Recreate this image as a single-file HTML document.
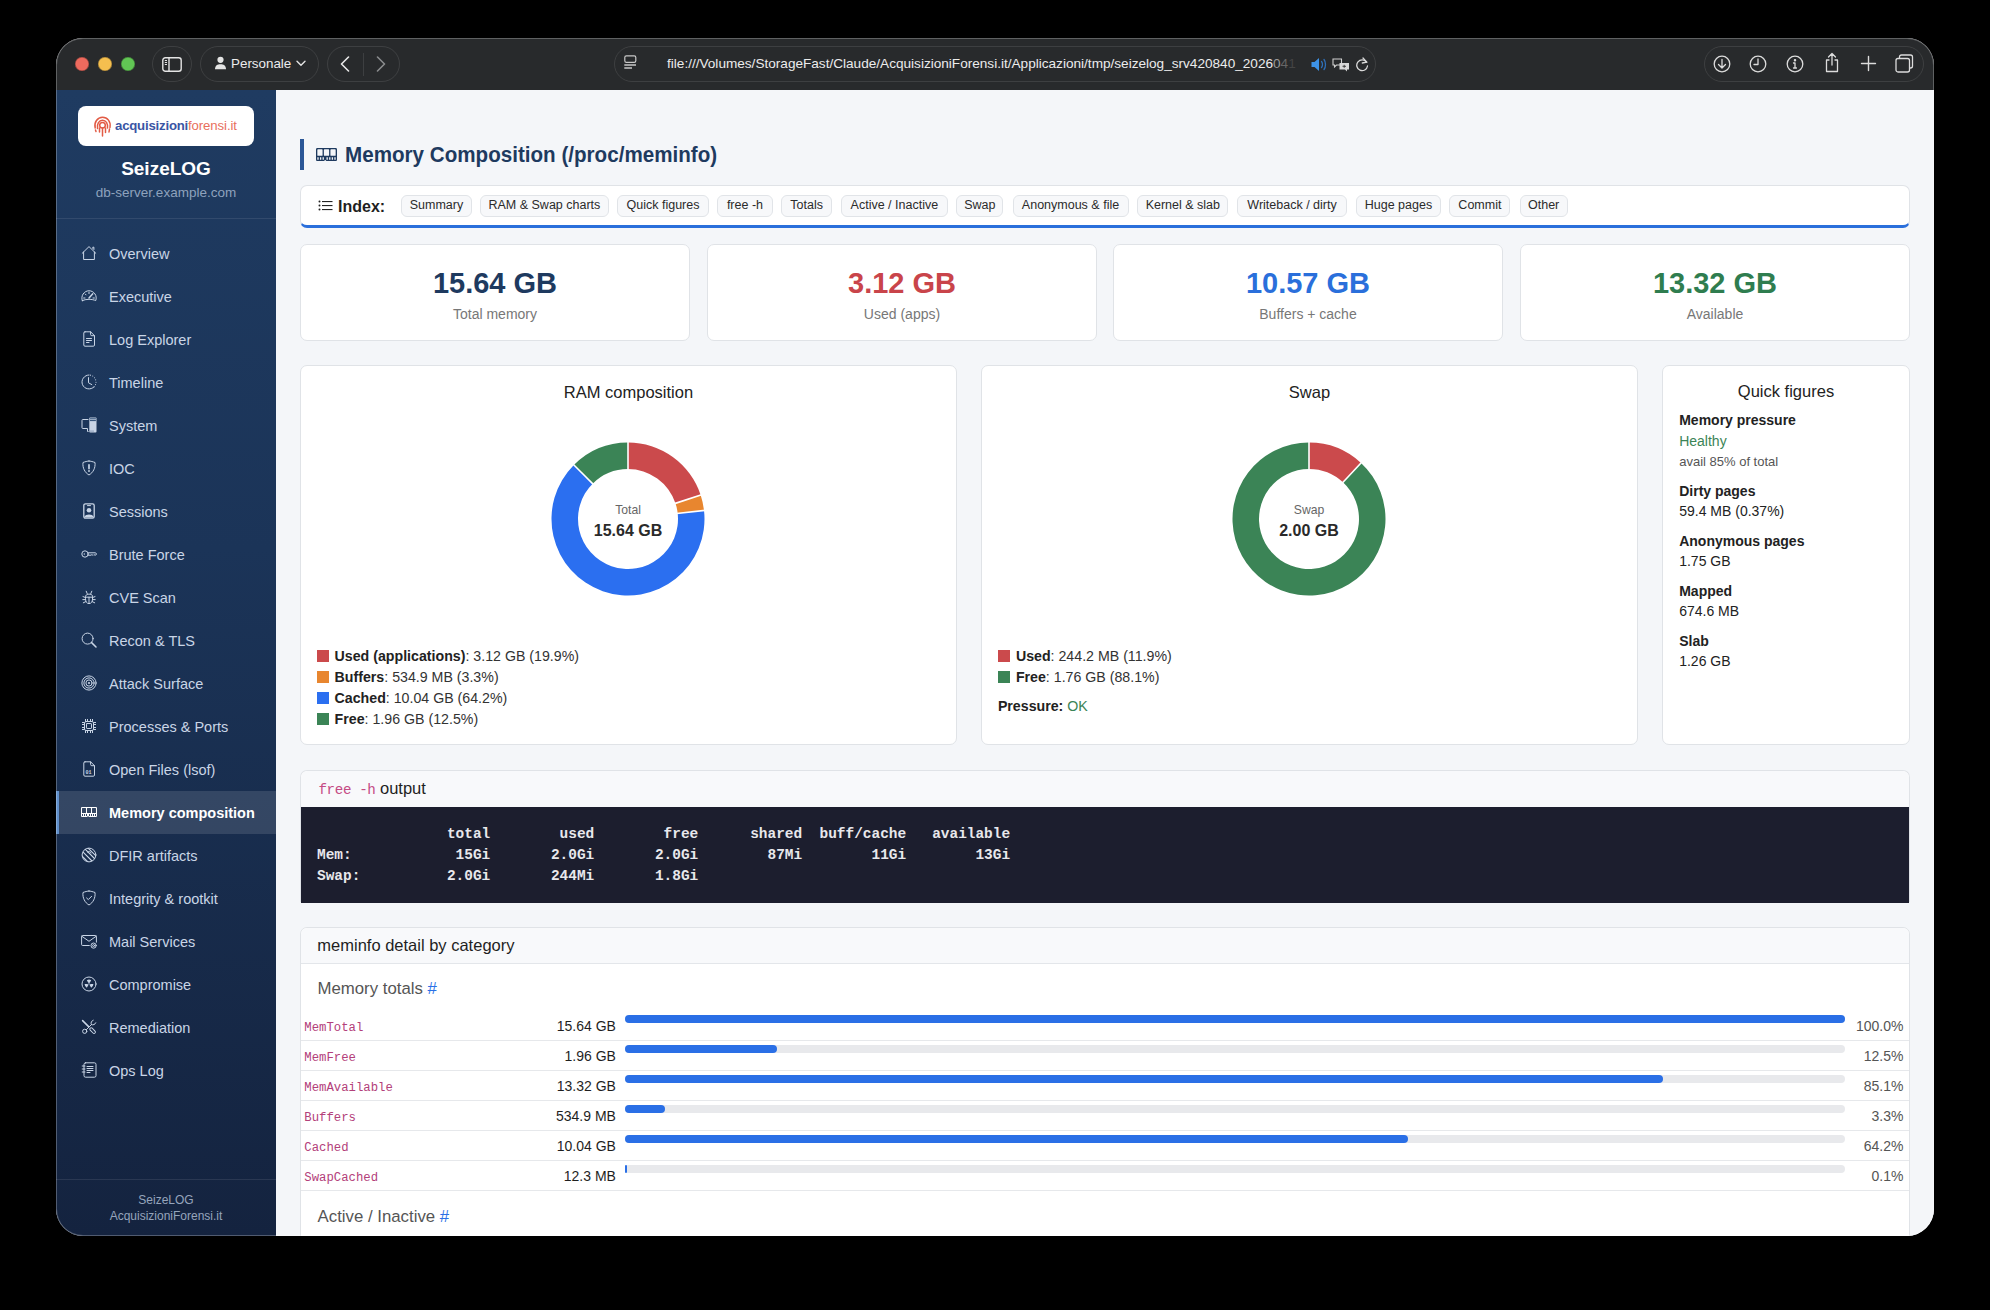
<!DOCTYPE html>
<html><head><meta charset="utf-8"><title>SeizeLOG - Memory composition</title>
<style>
*{box-sizing:border-box;margin:0;padding:0}
html,body{width:1990px;height:1310px;overflow:hidden;background:#000;font-family:"Liberation Sans",sans-serif}
.win{position:absolute;left:56px;top:38px;width:1878px;height:1198px;border-radius:27px;overflow:hidden;background:#f4f6f9}
.winborder{position:absolute;left:56px;top:38px;width:1878px;height:1198px;border-radius:27px;border:1px solid rgba(255,255,255,0.26);pointer-events:none}
.tb{position:absolute;left:0;top:0;width:1878px;height:52px;background:#282a2c}
.tl{position:absolute;top:19px;width:14px;height:14px;border-radius:50%;box-shadow:inset 0 0 0 0.7px rgba(0,0,0,0.28)}
.pill{position:absolute;top:8px;height:36px;border:1px solid rgba(255,255,255,0.10);border-radius:18px}
.tbt{position:absolute;color:#ececec;font-size:13.4px;line-height:18px}
.url{position:absolute;color:#ececec;font-size:13.6px;line-height:18px;white-space:nowrap;letter-spacing:0px}
.sb{position:absolute;left:0;top:52px;width:220px;height:1146px;background:linear-gradient(180deg,#1f3b61 0%,#1b3458 40%,#14233f 100%)}
.logo{position:absolute;left:22px;top:16px;width:176px;height:40px;background:#fff;border-radius:8px}
.lg1{position:absolute;left:37px;top:12px;font-size:13.2px;font-weight:bold;color:#3a55a4;letter-spacing:-0.2px;line-height:16px}
.lg2{position:absolute;left:110px;top:12px;font-size:13.2px;color:#e86f5c;letter-spacing:-0.1px;line-height:16px}
.brand{position:absolute;left:0;width:220px;top:68px;text-align:center;color:#fff;font-weight:bold;font-size:19px;line-height:22px}
.host{position:absolute;left:0;width:220px;top:95px;text-align:center;color:#8ea2bd;font-size:13.5px;line-height:16px}
.sep{position:absolute;left:0;width:220px;height:1px;background:rgba(255,255,255,0.09)}
.nav{position:absolute;left:0;width:220px;height:43px}
.nav.act{background:rgba(255,255,255,0.12)}
.nav.act:before{content:"";position:absolute;left:0;top:0;width:3px;height:43px;background:#5f8fcb}
.ni{position:absolute;left:25px;top:13px;width:17px;height:16px}
.ni svg{display:block}
.nt{position:absolute;left:53px;top:14px;font-size:14.5px;line-height:17px;color:#c9d5e6;white-space:nowrap}
.nav.act .nt{color:#fff;font-weight:bold}
.foot{position:absolute;left:0;width:220px;top:1102px;text-align:center;color:#96a5bc;font-size:12px;line-height:16px}
.main{position:absolute;left:220px;top:52px;width:1658px;height:1146px;background:#f4f6f9;overflow:hidden}
.card{position:absolute;background:#fff;border:1px solid #e0e3e7;border-radius:7px}
.ab{position:absolute}
.chip{position:absolute;top:9px;height:21.5px;border:1px solid #e1e4e8;background:#f7f8fa;border-radius:6px;font-size:12.5px;line-height:18px;color:#2b2b2b;text-align:center;white-space:nowrap}
.sv{position:absolute;left:0;right:0;top:21px;text-align:center;font-size:29px;font-weight:bold;line-height:34px}
.sl{position:absolute;left:0;right:0;top:61px;text-align:center;font-size:14px;color:#777;line-height:17px}
.ct{position:absolute;left:0;right:0;top:17px;text-align:center;font-size:16.5px;color:#222;line-height:19px}
.lg{position:absolute;font-size:14.2px;color:#333;line-height:21px;white-space:nowrap}
.lg b{color:#222}
.sq{display:inline-block;width:12px;height:12px;vertical-align:-1px;margin-right:6px}
.qf{position:absolute;left:16px;font-size:14px;line-height:21px;color:#222;white-space:nowrap}
.mono{font-family:"Liberation Mono",monospace}
pre.fh{position:absolute;left:16px;top:15px;font-family:"Liberation Mono",monospace;font-size:14.45px;line-height:21px;color:#e8e8ec;font-weight:bold}
.row{position:absolute;left:0;width:1608px;height:30px;border-bottom:1px solid #e6e8eb}
.rn{position:absolute;left:4px;top:9px;font-family:"Liberation Mono",monospace;font-size:13px;line-height:16px;color:#b3407a}
.rv{position:absolute;left:150px;width:165px;top:8px;text-align:right;font-size:14px;line-height:17px;color:#1f1f1f}
.bar{position:absolute;left:324px;top:5px;width:1220px;height:8px;border-radius:4px;background:#e8e9ec}
.bar i{position:absolute;left:0;top:0;height:8px;border-radius:4px;background:#2a6fe6}
.rp{position:absolute;left:1500px;width:103px;top:8px;text-align:right;font-size:14px;line-height:17px;color:#555}
.sh{position:absolute;left:16px;font-size:16.5px;line-height:20px;color:#555}
.sh span{color:#2a6fe6}
</style></head>
<body>
<div class="win">
<div class="tb">
  <div class="tl" style="left:19px;background:#ed6a5e"></div>
  <div class="tl" style="left:42px;background:#f5bf4f"></div>
  <div class="tl" style="left:65px;background:#61c554"></div>
  <div class="pill" style="left:96px;width:40px"></div>
  <svg style="position:absolute;left:106px;top:19px" width="20" height="15" viewBox="0 0 20 15" fill="none" stroke="#e4e4e4" stroke-width="1.4"><rect x="0.8" y="0.8" width="18.4" height="13.4" rx="2.5"/><path d="M7 0.8 V14.2"/><path d="M2.8 3.5 H5 M2.8 5.5 H5 M2.8 7.5 H5" stroke-width="1.1"/></svg>
  <div class="pill" style="left:144px;width:119px"></div>
  <svg style="position:absolute;left:159px;top:18px" width="11" height="14" viewBox="0 0 11 14" fill="#e4e4e4"><circle cx="5.5" cy="3.8" r="3.1"/><path d="M0 13.2 C0 9.5 2.5 8.2 5.5 8.2 C8.5 8.2 11 9.5 11 13.2 Z"/></svg>
  <div class="tbt" style="left:175px;top:17px">Personale</div>
  <svg style="position:absolute;left:240px;top:22px" width="10" height="7" viewBox="0 0 10 7" fill="none" stroke="#e4e4e4" stroke-width="1.4" stroke-linecap="round"><path d="M1 1.2 L5 5.2 L9 1.2"/></svg>
  <div class="pill" style="left:271px;width:73px"></div>
  <div style="position:absolute;left:307px;top:15px;width:1px;height:23px;background:rgba(255,255,255,0.1)"></div>
  <svg style="position:absolute;left:284px;top:18px" width="10" height="16" viewBox="0 0 10 16" fill="none" stroke="#e8e8e8" stroke-width="1.6" stroke-linecap="round" stroke-linejoin="round"><path d="M8.5 1 L1.5 8 L8.5 15"/></svg>
  <svg style="position:absolute;left:320px;top:18px" width="10" height="16" viewBox="0 0 10 16" fill="none" stroke="#8a8c8e" stroke-width="1.6" stroke-linecap="round" stroke-linejoin="round"><path d="M1.5 1 L8.5 8 L1.5 15"/></svg>
  <div class="pill" style="left:558px;width:762px"></div>
  <svg style="position:absolute;left:568px;top:17px" width="13" height="15" viewBox="0 0 13 15" fill="none" stroke="#c8c8c8" stroke-width="1.2"><rect x="0.8" y="0.8" width="11" height="6.5" rx="1.6"/><path d="M0.3 10 H12 M0.3 13 H8" stroke-width="1.3"/></svg>
  <div class="url" style="left:611px;top:17px">file:///Volumes/StorageFast/Claude/AcquisizioniForensi.it/Applicazioni/tmp/seizelog_srv420840_2026<span style="color:#9a9a9a">0</span><span style="color:#666">4</span><span style="color:#444">1</span></div>
  <svg style="position:absolute;left:1255px;top:19px" width="16" height="15" viewBox="0 0 16 15"><path d="M0.5 5 H3.5 L8 1 V14 L3.5 10 H0.5 Z" fill="#3d93e8"/><path d="M10.5 4.5 C11.8 6 11.8 9 10.5 10.5 M13 2.5 C15 5 15 10 13 12.5" fill="none" stroke="#2e6fb8" stroke-width="1.3" stroke-linecap="round"/></svg>
  <svg style="position:absolute;left:1276px;top:19.5px" width="18" height="15" viewBox="0 0 18 15"><path d="M1 1 H9.5 V7 H4.5 L2.5 9 V7 H1 Z" fill="none" stroke="#d0d0d0" stroke-width="1.1"/><path d="M7.5 5 H17 V11.5 H15 V13.5 L13 11.5 H7.5 Z" fill="#d8d8d8"/><path d="M10.5 8.3 H14 M12.2 6.8 V9.8" stroke="#333" stroke-width="0.9"/></svg>
  <svg style="position:absolute;left:1299px;top:18.5px" width="14" height="15" viewBox="0 0 14 15" fill="none" stroke="#d8d8d8" stroke-width="1.3" stroke-linecap="round" stroke-linejoin="round"><path d="M11.6 5.2 A5.4 5.4 0 1 0 12.5 9"/><path d="M8 1 L11.8 5.2 L7.3 6"/></svg>
  <div class="pill" style="left:1648px;width:220px"></div>
  <svg style="position:absolute;left:1657px;top:17px" width="18" height="18" viewBox="0 0 18 18" fill="none" stroke="#dcdcdc" stroke-width="1.3" stroke-linecap="round" stroke-linejoin="round"><circle cx="9" cy="9" r="7.8"/><path d="M9 4.5 V13 M5.5 9.5 L9 13 L12.5 9.5"/></svg>
  <svg style="position:absolute;left:1693px;top:17px" width="18" height="18" viewBox="0 0 18 18" fill="none" stroke="#dcdcdc" stroke-width="1.3" stroke-linecap="round" stroke-linejoin="round"><circle cx="9" cy="9" r="7.8"/><path d="M9 4 V9.5 H5"/></svg>
  <svg style="position:absolute;left:1730px;top:17px" width="18" height="18" viewBox="0 0 18 18" fill="none" stroke="#dcdcdc" stroke-width="1.3" stroke-linecap="round" stroke-linejoin="round"><circle cx="9" cy="9" r="7.8"/><path d="M9 8 V13 M7.5 13 H10.5 M7.5 8 H9"/><circle cx="9" cy="5.2" r="0.6" fill="#dcdcdc"/></svg>
  <svg style="position:absolute;left:1767px;top:14px" width="18" height="21" viewBox="0 0 18 21" fill="none" stroke="#dcdcdc" stroke-width="1.3" stroke-linecap="round" stroke-linejoin="round"><path d="M6 8 H3.5 V19.5 H14.5 V8 H12 M9 1.5 V13 M5.5 5 L9 1.5 L12.5 5"/></svg>
  <svg style="position:absolute;left:1804px;top:17px" width="17" height="17" viewBox="0 0 17 17" fill="none" stroke="#dcdcdc" stroke-width="1.4" stroke-linecap="round"><path d="M8.5 1.5 V15.5 M1.5 8.5 H15.5"/></svg>
  <svg style="position:absolute;left:1839px;top:16px" width="19" height="19" viewBox="0 0 19 19" fill="none" stroke="#dcdcdc" stroke-width="1.3" stroke-linejoin="round"><path d="M4.5 4.5 V3 C4.5 1.8 5.3 1 6.5 1 H15.5 C16.7 1 17.5 1.8 17.5 3 V12 C17.5 13.2 16.7 14 15.5 14 H14.5"/><rect x="1" y="4.5" width="13.5" height="13.5" rx="2"/></svg>
</div>

<div class="sb">
  <div class="logo">
    <svg style="position:absolute;left:15px;top:10px" width="19" height="21" viewBox="0 0 19 21" fill="none" stroke="#e25b45" stroke-width="1.5" stroke-linecap="round"><path d="M2.2 12 C0.8 6.5 4.5 1.2 9.5 1.2 C14.5 1.2 18 5.5 17 11.5"/><path d="M4.5 12.5 C3.8 8 6 4.2 9.5 4.2 C13 4.2 15 7.5 14.5 12"/><circle cx="9.5" cy="9.2" r="2.8"/><path d="M6.5 12 V16 M9.5 12 V20 M12.5 12 V16.5 M2.5 14 L3 15.5 M16.5 13 L16 16"/></svg>
    <span class="lg1">acquisizioni</span><span class="lg2">forensi.it</span>
  </div>
  <div class="brand">SeizeLOG</div>
  <div class="host">db-server.example.com</div>
  <div class="sep" style="top:128px"></div>
  <div class="nav" style="top:142px"><span class="ni"><svg width="16" height="16" viewBox="0 0 16 16" fill="none" stroke="#c9d5e6" stroke-width="1" stroke-linecap="round" stroke-linejoin="round" ><path d="M1.2 8.3 L8 1.6 L14.8 8.3 M2.6 7 V14.5 H13.4 V7 M11.8 3.4 V2.2 H12.9 V4.5"/></svg></span><span class="nt">Overview</span></div>
<div class="nav" style="top:185px"><span class="ni"><svg width="16" height="16" viewBox="0 0 16 16" fill="none" stroke="#c9d5e6" stroke-width="1" stroke-linecap="round" stroke-linejoin="round" ><path d="M1.3 12.6 A7.2 7.2 0 1 1 14.7 12.6 C13.2 11.9 10.7 11.3 8 11.3 C5.3 11.3 2.8 11.9 1.3 12.6 Z"/><path d="M8 4.2 V5.6 M4.2 6 L5.1 6.9 M2.6 10 H4 M12 10 H13.4"/><path d="M8 10 L11.8 5.8" stroke-width="1.5"/></svg></span><span class="nt">Executive</span></div>
<div class="nav" style="top:228px"><span class="ni"><svg width="16" height="16" viewBox="0 0 16 16" fill="none" stroke="#c9d5e6" stroke-width="1" stroke-linecap="round" stroke-linejoin="round" ><path d="M4 0.8 H9.6 L13.5 4.7 V14 A1.2 1.2 0 0 1 12.3 15.2 H4 A1.2 1.2 0 0 1 2.8 14 V2 A1.2 1.2 0 0 1 4 0.8 Z"/><path d="M9.6 0.8 V3.5 A1.2 1.2 0 0 0 10.8 4.7 H13.5" /><path d="M5.5 7.5 H10.5 M5.5 9.5 H10.5 M5.5 11.5 H8"/></svg></span><span class="nt">Log Explorer</span></div>
<div class="nav" style="top:271px"><span class="ni"><svg width="16" height="16" viewBox="0 0 16 16" fill="none" stroke="#c9d5e6" stroke-width="1" stroke-linecap="round" stroke-linejoin="round" ><path d="M8 1 A7 7 0 1 0 12.95 12.95"/><circle cx="9.46" cy="1.15" r="0.55" fill="#c9d5e6" stroke="none"/><circle cx="11.71" cy="2.06" r="0.55" fill="#c9d5e6" stroke="none"/><circle cx="13.52" cy="3.69" r="0.55" fill="#c9d5e6" stroke="none"/><circle cx="14.66" cy="5.84" r="0.55" fill="#c9d5e6" stroke="none"/><circle cx="15.00" cy="8.24" r="0.55" fill="#c9d5e6" stroke="none"/><circle cx="14.49" cy="10.62" r="0.55" fill="#c9d5e6" stroke="none"/><circle cx="13.20" cy="12.68" r="0.55" fill="#c9d5e6" stroke="none"/><path d="M7.5 3.6 V8.8 L10.8 10.6"/></svg></span><span class="nt">Timeline</span></div>
<div class="nav" style="top:314px"><span class="ni"><svg width="16" height="16" viewBox="0 0 16 16" fill="none" stroke="#c9d5e6" stroke-width="1" stroke-linecap="round" stroke-linejoin="round" ><path d="M7 2.5 H1.8 A0.8 0.8 0 0 0 1 3.3 V10.7 A0.8 0.8 0 0 0 1.8 11.5 H6.5 V14.5 H7.2"/><rect x="8.3" y="0.5" width="7.2" height="15" rx="0.9" fill="#c9d5e6" stroke="none"/><path d="M9.3 1.8 H14.5 M9.3 3.6 H14.5" stroke="#2b4a72"/><circle cx="10" cy="14" r="0.5" fill="#2b4a72" stroke="none"/><circle cx="12" cy="14" r="0.5" fill="#2b4a72" stroke="none"/></svg></span><span class="nt">System</span></div>
<div class="nav" style="top:357px"><span class="ni"><svg width="16" height="16" viewBox="0 0 16 16" fill="none" stroke="#c9d5e6" stroke-width="1" stroke-linecap="round" stroke-linejoin="round" ><path d="M8 1 C6.6 1 3.6 1.9 2 2.5 C1.4 8 3.9 12.6 8 15 C12.1 12.6 14.6 8 14 2.5 C12.4 1.9 9.4 1 8 1 Z"/><path d="M8 4.8 V8.6" stroke-width="1.7"/><circle cx="8" cy="11" r="0.95" fill="#c9d5e6" stroke="none"/></svg></span><span class="nt">IOC</span></div>
<div class="nav" style="top:400px"><span class="ni"><svg width="16" height="16" viewBox="0 0 16 16" fill="none" stroke="#c9d5e6" stroke-width="1" stroke-linecap="round" stroke-linejoin="round" ><rect x="2.8" y="0.8" width="10.4" height="14.4" rx="1.6" stroke-width="1.3"/><path d="M6.5 2.6 H9.5"/><circle cx="8" cy="7.3" r="2.3" fill="#c9d5e6" stroke="none"/><path d="M3.6 13.6 C4.4 10.9 11.6 10.9 12.4 13.6 V14.4 H3.6 Z" fill="#c9d5e6" stroke="none"/></svg></span><span class="nt">Sessions</span></div>
<div class="nav" style="top:443px"><span class="ni"><svg width="16" height="16" viewBox="0 0 16 16" fill="none" stroke="#c9d5e6" stroke-width="1" stroke-linecap="round" stroke-linejoin="round" ><circle cx="4" cy="8" r="3.2"/><circle cx="3.3" cy="8" r="0.7" fill="#c9d5e6" stroke="none"/><path d="M7.2 6.8 H14.6 L15.5 8 L14.6 9.2 H13.8 L13.2 8.6 L12.6 9.2 L12 8.6 L11.4 9.2 L10.8 8.6 L10.2 9.2 H7.2"/></svg></span><span class="nt">Brute Force</span></div>
<div class="nav" style="top:486px"><span class="ni"><svg width="16" height="16" viewBox="0 0 16 16" fill="none" stroke="#c9d5e6" stroke-width="1" stroke-linecap="round" stroke-linejoin="round" ><path d="M4.5 7.2 C4.5 4.4 11.5 4.4 11.5 7.2 V10.2 C11.5 13 10 14.6 8 14.6 C6 14.6 4.5 13 4.5 10.2 Z M4.5 8.2 H11.5 M8 8.2 V14.5 M6.2 4.6 L5.2 2.2 M9.8 4.6 L10.8 2.2 M4.5 8.6 L2 7.6 M11.5 8.6 L14 7.6 M4.5 10.6 H1.8 M11.5 10.6 H14.2 M4.8 12.6 L2.3 13.8 M11.2 12.6 L13.7 13.8"/></svg></span><span class="nt">CVE Scan</span></div>
<div class="nav" style="top:529px"><span class="ni"><svg width="16" height="16" viewBox="0 0 16 16" fill="none" stroke="#c9d5e6" stroke-width="1" stroke-linecap="round" stroke-linejoin="round" ><circle cx="6.6" cy="6.6" r="5.5"/><path d="M10.6 10.6 L15 15" stroke-width="1.5"/></svg></span><span class="nt">Recon &amp; TLS</span></div>
<div class="nav" style="top:572px"><span class="ni"><svg width="16" height="16" viewBox="0 0 16 16" fill="none" stroke="#c9d5e6" stroke-width="1" stroke-linecap="round" stroke-linejoin="round" ><circle cx="8" cy="8" r="7.1"/><circle cx="8" cy="8" r="5.1"/><circle cx="8" cy="8" r="3.1"/><circle cx="8" cy="8" r="1.1" fill="#c9d5e6" stroke="none"/></svg></span><span class="nt">Attack Surface</span></div>
<div class="nav" style="top:615px"><span class="ni"><svg width="16" height="16" viewBox="0 0 16 16" fill="none" stroke="#c9d5e6" stroke-width="1" stroke-linecap="round" stroke-linejoin="round" ><rect x="3.5" y="3.5" width="9" height="9" rx="1.5"/><rect x="5.5" y="5.5" width="5" height="5" rx="0.6"/><path d="M4.5 1 V3.5 M6.5 1 V3.5 M9.5 1 V3.5 M11.5 1 V3.5 M4.5 12.5 V15 M6.5 12.5 V15 M9.5 12.5 V15 M11.5 12.5 V15 M1 4.5 H3.5 M1 6.5 H3.5 M1 9.5 H3.5 M1 11.5 H3.5 M12.5 4.5 H15 M12.5 6.5 H15 M12.5 9.5 H15 M12.5 11.5 H15" stroke-linecap="butt"/></svg></span><span class="nt">Processes &amp; Ports</span></div>
<div class="nav" style="top:658px"><span class="ni"><svg width="16" height="16" viewBox="0 0 16 16" fill="none" stroke="#c9d5e6" stroke-width="1" stroke-linecap="round" stroke-linejoin="round" ><path d="M4 0.8 H9.6 L13.5 4.7 V14 A1.2 1.2 0 0 1 12.3 15.2 H4 A1.2 1.2 0 0 1 2.8 14 V2 A1.2 1.2 0 0 1 4 0.8 Z"/><path d="M9.6 0.8 V3.5 A1.2 1.2 0 0 0 10.8 4.7 H13.5"/><text x="4.4" y="13" font-size="5" fill="#c9d5e6" stroke="none" font-family="Liberation Mono" font-weight="bold">01</text></svg></span><span class="nt">Open Files (lsof)</span></div>
<div class="nav act" style="top:701px"><span class="ni"><svg width="16" height="16" viewBox="0 0 16 16" fill="#fff"><path d="M1 3a1 1 0 0 0-1 1v8a1 1 0 0 0 1 1h4.586a1 1 0 0 0 .707-.293l.353-.353a.5.5 0 0 1 .708 0l.353.353a1 1 0 0 0 .707.293H15a1 1 0 0 0 1-1V4a1 1 0 0 0-1-1zm.5 1h3a.5.5 0 0 1 .5.5v4a.5.5 0 0 1-.5.5h-3a.5.5 0 0 1-.5-.5v-4a.5.5 0 0 1 .5-.5m5 0h3a.5.5 0 0 1 .5.5v4a.5.5 0 0 1-.5.5h-3a.5.5 0 0 1-.5-.5v-4a.5.5 0 0 1 .5-.5m4.5.5a.5.5 0 0 1 .5-.5h3a.5.5 0 0 1 .5.5v4a.5.5 0 0 1-.5.5h-3a.5.5 0 0 1-.5-.5zM2 10v2H1v-2zm2 0v2H3v-2zm2 0v2H5v-2zm3 0v2H8v-2zm2 0v2h-1v-2zm2 0v2h-1v-2zm2 0v2h-1v-2z"/></svg></span><span class="nt">Memory composition</span></div>
<div class="nav" style="top:744px"><span class="ni"><svg width="16" height="16" viewBox="0 0 16 16" fill="none" stroke="#c9d5e6" stroke-width="1" stroke-linecap="round" stroke-linejoin="round" ><defs><clipPath id="fpc"><circle cx="8" cy="8" r="7"/></clipPath></defs><circle cx="8" cy="8" r="6.9"/><g clip-path="url(#fpc)" stroke-width="1.1"><path d="M-2 6 L8 16 M0 3 L11 14 M2.5 0.5 L13.5 11.5 M5.5 -0.5 L16 10"/></g><path d="M6.5 5 C7.5 4 9.5 4.5 10 6"/></svg></span><span class="nt">DFIR artifacts</span></div>
<div class="nav" style="top:787px"><span class="ni"><svg width="16" height="16" viewBox="0 0 16 16" fill="none" stroke="#c9d5e6" stroke-width="1" stroke-linecap="round" stroke-linejoin="round" ><path d="M8 1 C6.6 1 3.6 1.9 2 2.5 C1.4 8 3.9 12.6 8 15 C12.1 12.6 14.6 8 14 2.5 C12.4 1.9 9.4 1 8 1 Z"/><path d="M5.6 8 L7.3 9.6 L10.6 6.3"/></svg></span><span class="nt">Integrity &amp; rootkit</span></div>
<div class="nav" style="top:830px"><span class="ni"><svg width="16" height="16" viewBox="0 0 16 16" fill="none" stroke="#c9d5e6" stroke-width="1" stroke-linecap="round" stroke-linejoin="round" ><path d="M8.3 12.5 H1.6 A1 1 0 0 1 0.6 11.5 V3.5 A1 1 0 0 1 1.6 2.5 H14.4 A1 1 0 0 1 15.4 3.5 V9.2 M0.8 3.2 L8 8.3 L15.2 3.2"/><circle cx="12.6" cy="12.6" r="2.6"/><circle cx="12.6" cy="12.6" r="1"/></svg></span><span class="nt">Mail Services</span></div>
<div class="nav" style="top:873px"><span class="ni"><svg width="16" height="16" viewBox="0 0 16 16" fill="none" stroke="#c9d5e6" stroke-width="1" stroke-linecap="round" stroke-linejoin="round" ><circle cx="8" cy="8" r="7"/><path d="M8 8 L5.8 4.2 A4.4 4.4 0 0 1 10.2 4.2 Z M8 8 L12.4 8 A4.4 4.4 0 0 1 10.2 11.8 Z M8 8 L5.8 11.8 A4.4 4.4 0 0 1 3.6 8 Z" fill="#c9d5e6" stroke="none"/><circle cx="8" cy="8" r="1.3" fill="#1a3050" stroke="none"/><circle cx="8" cy="8" r="0.7" fill="#c9d5e6" stroke="none"/></svg></span><span class="nt">Compromise</span></div>
<div class="nav" style="top:916px"><span class="ni"><svg width="16" height="16" viewBox="0 0 16 16" fill="none" stroke="#c9d5e6" stroke-width="1" stroke-linecap="round" stroke-linejoin="round" ><path d="M1.6 1.6 L7.6 7.6" stroke-width="1.5"/><rect x="-1.4" y="-3.4" width="2.8" height="6.8" rx="1.4" transform="translate(11.6 11.6) rotate(-45)"/><path d="M12.2 1.2 A3.1 3.1 0 0 0 10.4 5.6 L5.4 10.6 M14.8 3.8 A3.1 3.1 0 0 1 10.4 5.6"/><circle cx="3.7" cy="12.3" r="2.1"/></svg></span><span class="nt">Remediation</span></div>
<div class="nav" style="top:959px"><span class="ni"><svg width="16" height="16" viewBox="0 0 16 16" fill="none" stroke="#c9d5e6" stroke-width="1" stroke-linecap="round" stroke-linejoin="round" ><rect x="3" y="0.8" width="12" height="14.4" rx="1.6"/><path d="M1.2 4 H4 M1.2 7 H4 M1.2 10 H4 M6 4.5 H12 M6 6.5 H12 M6 8.5 H12 M6 10.5 H9"/></svg></span><span class="nt">Ops Log</span></div>
  <div class="sep" style="top:1089px"></div>
  <div class="foot">SeizeLOG<br>AcquisizioniForensi.it</div>
</div>

<div class="main">
<div class="ab" style="left:24px;top:49px;width:4px;height:31px;background:#2b5797"></div>
<svg class="ab" style="left:40px;top:58px" width="21" height="13.1" viewBox="0 3 16 10" fill="#1e3a5f"><path d="M1 3a1 1 0 0 0-1 1v8a1 1 0 0 0 1 1h4.586a1 1 0 0 0 .707-.293l.353-.353a.5.5 0 0 1 .708 0l.353.353a1 1 0 0 0 .707.293H15a1 1 0 0 0 1-1V4a1 1 0 0 0-1-1zm.5 1h3a.5.5 0 0 1 .5.5v4a.5.5 0 0 1-.5.5h-3a.5.5 0 0 1-.5-.5v-4a.5.5 0 0 1 .5-.5m5 0h3a.5.5 0 0 1 .5.5v4a.5.5 0 0 1-.5.5h-3a.5.5 0 0 1-.5-.5v-4a.5.5 0 0 1 .5-.5m4.5.5a.5.5 0 0 1 .5-.5h3a.5.5 0 0 1 .5.5v4a.5.5 0 0 1-.5.5h-3a.5.5 0 0 1-.5-.5zM2 10v2H1v-2zm2 0v2H3v-2zm2 0v2H5v-2zm3 0v2H8v-2zm2 0v2h-1v-2zm2 0v2h-1v-2zm2 0v2h-1v-2z"/></svg>
<div class="ab" style="left:69px;top:51.8px;font-size:22.5px;line-height:26px;font-weight:bold;color:#1e3a5f;white-space:nowrap;transform:scaleX(0.916);transform-origin:0 0">Memory Composition (/proc/meminfo)</div>
<div class="card" style="left:24px;top:95px;width:1610px;height:43px;border-bottom:3px solid #2a6fdb;border-radius:7px">
<svg class="ab" style="left:17px;top:14px" width="15" height="11" viewBox="0 0 15 11" fill="#222"><circle cx="1.5" cy="1.5" r="1"/><circle cx="1.5" cy="5.5" r="1"/><circle cx="1.5" cy="9.5" r="1"/><rect x="4" y="1" width="10.5" height="1.1"/><rect x="4" y="5" width="10.5" height="1.1"/><rect x="4" y="9" width="10.5" height="1.1"/></svg>
<div class="ab" style="left:37px;top:10.9px;font-size:16px;line-height:19px;font-weight:bold;color:#1f1f1f">Index:</div>
<div class="chip" style="left:100.3px;width:70.4px">Summary</div>
<div class="chip" style="left:179.2px;width:128.4px">RAM &amp; Swap charts</div>
<div class="chip" style="left:316.3px;width:91.4px">Quick figures</div>
<div class="chip" style="left:416.3px;width:55.3px">free -h</div>
<div class="chip" style="left:480.0px;width:51.4px">Totals</div>
<div class="chip" style="left:540.2px;width:106.4px">Active / Inactive</div>
<div class="chip" style="left:655.3px;width:47.2px">Swap</div>
<div class="chip" style="left:711.5px;width:116.0px">Anonymous &amp; file</div>
<div class="chip" style="left:836.3px;width:91.1px">Kernel &amp; slab</div>
<div class="chip" style="left:936.0px;width:110.0px">Writeback / dirty</div>
<div class="chip" style="left:1055.4px;width:84.2px">Huge pages</div>
<div class="chip" style="left:1148.4px;width:61.0px">Commit</div>
<div class="chip" style="left:1218.6px;width:48.1px">Other</div>
</div>
<div class="card" style="left:24.0px;top:154px;width:390px;height:97px"><div class="sv" style="color:#1e3a5f">15.64 GB</div><div class="sl">Total memory</div></div>
<div class="card" style="left:431.0px;top:154px;width:390px;height:97px"><div class="sv" style="color:#c9444a">3.12 GB</div><div class="sl">Used (apps)</div></div>
<div class="card" style="left:837.0px;top:154px;width:390px;height:97px"><div class="sv" style="color:#2a6fdb">10.57 GB</div><div class="sl">Buffers + cache</div></div>
<div class="card" style="left:1244.0px;top:154px;width:390px;height:97px"><div class="sv" style="color:#2f7d4f">13.32 GB</div><div class="sl">Available</div></div><div class="card" style="left:24px;top:275px;width:657px;height:380px">
<div class="ct" style="top:16.5px">RAM composition</div>
<div class="ab" style="left:247.0px;top:73.0px"><svg width="160" height="160" viewBox="0 0 160 160"><path d="M80.00 3.50 A76.5 76.5 0 0 1 152.64 55.99 L127.47 64.31 A50 50 0 0 0 80.00 30.00 Z" fill="#cb4a4c"/><path d="M152.64 55.99 A76.5 76.5 0 0 1 156.02 71.48 L129.69 74.43 A50 50 0 0 0 127.47 64.31 Z" fill="#e8862f"/><path d="M156.02 71.48 A76.5 76.5 0 1 1 25.86 25.95 L44.62 44.67 A50 50 0 1 0 129.69 74.43 Z" fill="#2b6ff0"/><path d="M25.86 25.95 A76.5 76.5 0 0 1 80.00 3.50 L80.00 30.00 A50 50 0 0 0 44.62 44.67 Z" fill="#3b8456"/><line x1="80.00" y1="31.00" x2="80.00" y2="2.50" stroke="#fff" stroke-width="1.6"/><line x1="126.52" y1="64.62" x2="153.59" y2="55.68" stroke="#fff" stroke-width="1.6"/><line x1="128.69" y1="74.54" x2="157.02" y2="71.37" stroke="#fff" stroke-width="1.6"/><line x1="45.32" y1="45.38" x2="25.16" y2="25.24" stroke="#fff" stroke-width="1.6"/></svg></div>
<div class="ab" style="left:227.0px;width:200px;top:136.5px;text-align:center;font-size:12.2px;line-height:15px;color:#666">Total</div>
<div class="ab" style="left:227.0px;width:200px;top:155.9px;text-align:center;font-size:16px;line-height:18px;font-weight:bold;color:#2a2a2a">15.64 GB</div>
<div class="lg" style="left:15.6px;top:279.6px"><span class="sq" style="background:#cb4a4c"></span><b>Used (applications)</b>: 3.12 GB (19.9%)</div>
<div class="lg" style="left:15.6px;top:300.6px"><span class="sq" style="background:#e8862f"></span><b>Buffers</b>: 534.9 MB (3.3%)</div>
<div class="lg" style="left:15.6px;top:321.6px"><span class="sq" style="background:#2b6ff0"></span><b>Cached</b>: 10.04 GB (64.2%)</div>
<div class="lg" style="left:15.6px;top:342.6px"><span class="sq" style="background:#3b8456"></span><b>Free</b>: 1.96 GB (12.5%)</div>
</div>
<div class="card" style="left:705px;top:275px;width:657px;height:380px">
<div class="ct" style="top:16.5px">Swap</div>
<div class="ab" style="left:247.0px;top:73.0px"><svg width="160" height="160" viewBox="0 0 160 160"><path d="M80.00 3.50 A76.5 76.5 0 0 1 132.02 23.91 L114.00 43.34 A50 50 0 0 0 80.00 30.00 Z" fill="#cb4a4c"/><path d="M132.02 23.91 A76.5 76.5 0 1 1 80.00 3.50 L80.00 30.00 A50 50 0 1 0 114.00 43.34 Z" fill="#3b8456"/><line x1="80.00" y1="31.00" x2="80.00" y2="2.50" stroke="#fff" stroke-width="1.6"/><line x1="113.32" y1="44.07" x2="132.70" y2="23.17" stroke="#fff" stroke-width="1.6"/></svg></div>
<div class="ab" style="left:227.0px;width:200px;top:136.5px;text-align:center;font-size:12.2px;line-height:15px;color:#666">Swap</div>
<div class="ab" style="left:227.0px;width:200px;top:155.9px;text-align:center;font-size:16px;line-height:18px;font-weight:bold;color:#2a2a2a">2.00 GB</div>
<div class="lg" style="left:15.9px;top:280.1px"><span class="sq" style="background:#cb4a4c"></span><b>Used</b>: 244.2 MB (11.9%)</div>
<div class="lg" style="left:15.9px;top:301.1px"><span class="sq" style="background:#3b8456"></span><b>Free</b>: 1.76 GB (88.1%)</div>
<div class="lg" style="left:15.9px;top:330.1px"><b>Pressure:</b> <span style="color:#3b8456">OK</span></div>
</div>
<div class="card" style="left:1386px;top:275px;width:248px;height:380px">
<div class="ct" style="top:15.8px">Quick figures</div>
<div class="qf" style="left:16.2px;top:44.9px;font-size:14px;line-height:18px;font-weight:bold;color:#222">Memory pressure</div>
<div class="qf" style="left:16.2px;top:65.5px;font-size:14px;line-height:18px;color:#3b8456">Healthy</div>
<div class="qf" style="left:16.2px;top:87.1px;font-size:13px;line-height:18px;color:#555">avail 85% of total</div>
<div class="qf" style="left:16.2px;top:115.9px;font-size:14px;line-height:18px;font-weight:bold;color:#222">Dirty pages</div>
<div class="qf" style="left:16.2px;top:136.0px;font-size:14px;line-height:18px;color:#222">59.4 MB (0.37%)</div>
<div class="qf" style="left:16.2px;top:165.9px;font-size:14px;line-height:18px;font-weight:bold;color:#222">Anonymous pages</div>
<div class="qf" style="left:16.2px;top:186.1px;font-size:14px;line-height:18px;color:#222">1.75 GB</div>
<div class="qf" style="left:16.2px;top:215.9px;font-size:14px;line-height:18px;font-weight:bold;color:#222">Mapped</div>
<div class="qf" style="left:16.2px;top:236.1px;font-size:14px;line-height:18px;color:#222">674.6 MB</div>
<div class="qf" style="left:16.2px;top:265.9px;font-size:14px;line-height:18px;font-weight:bold;color:#222">Slab</div>
<div class="qf" style="left:16.2px;top:286.1px;font-size:14px;line-height:18px;color:#222">1.26 GB</div>
</div><div class="card" style="left:24px;top:680px;width:1610px;height:132px;border-bottom:none;border-radius:7px 7px 0 0">
<div class="ab" style="left:0;top:0;right:0;height:36px;background:#f8f9fb;border-radius:7px 7px 0 0"></div>
<div class="ab" style="left:17.4px;top:8.4px;white-space:nowrap;line-height:18px"><span class="mono" style="font-size:14.2px;letter-spacing:-0.35px;color:#c54b84">free -h</span> <span style="font-size:16.5px;color:#1f1f1f">output</span></div>
<div class="ab" style="left:0;top:36px;width:1608px;height:96px;background:#1c1e2e">
<pre class="fh" style="top:16.7px">               total        used        free      shared  buff/cache   available
Mem:            15Gi       2.0Gi       2.0Gi        87Mi        11Gi        13Gi
Swap:          2.0Gi       244Mi       1.8Gi</pre>
</div></div>
<div class="card" style="left:24px;top:837px;width:1610px;height:420px">
<div class="ab" style="left:0;top:0;right:0;height:36px;background:#f8f9fb;border-bottom:1px solid #e3e6ea;border-radius:7px 7px 0 0"></div>
<div class="ab" style="left:16.3px;top:8.1px;font-size:16.5px;line-height:19px;color:#1f1f1f;white-space:nowrap">meminfo detail by category</div>
<div class="sh" style="left:16.5px;top:50.9px;font-size:16.8px">Memory totals <span>#</span></div>
<div class="row" style="top:83px"><div class="rn" style="top:8.7px;left:3.3px;font-size:12.3px">MemTotal</div><div class="rv" style="left:0;width:314.9px;top:6.6px">15.64 GB</div><div class="bar" style="left:323.5px;top:4.2px"><i style="width:100.0%"></i></div><div class="rp" style="left:1400px;width:202.5px;top:6.6px">100.0%</div></div>
<div class="row" style="top:113px"><div class="rn" style="top:8.7px;left:3.3px;font-size:12.3px">MemFree</div><div class="rv" style="left:0;width:314.9px;top:6.6px">1.96 GB</div><div class="bar" style="left:323.5px;top:4.2px"><i style="width:12.5%"></i></div><div class="rp" style="left:1400px;width:202.5px;top:6.6px">12.5%</div></div>
<div class="row" style="top:143px"><div class="rn" style="top:8.7px;left:3.3px;font-size:12.3px">MemAvailable</div><div class="rv" style="left:0;width:314.9px;top:6.6px">13.32 GB</div><div class="bar" style="left:323.5px;top:4.2px"><i style="width:85.1%"></i></div><div class="rp" style="left:1400px;width:202.5px;top:6.6px">85.1%</div></div>
<div class="row" style="top:173px"><div class="rn" style="top:8.7px;left:3.3px;font-size:12.3px">Buffers</div><div class="rv" style="left:0;width:314.9px;top:6.6px">534.9 MB</div><div class="bar" style="left:323.5px;top:4.2px"><i style="width:3.3%"></i></div><div class="rp" style="left:1400px;width:202.5px;top:6.6px">3.3%</div></div>
<div class="row" style="top:203px"><div class="rn" style="top:8.7px;left:3.3px;font-size:12.3px">Cached</div><div class="rv" style="left:0;width:314.9px;top:6.6px">10.04 GB</div><div class="bar" style="left:323.5px;top:4.2px"><i style="width:64.2%"></i></div><div class="rp" style="left:1400px;width:202.5px;top:6.6px">64.2%</div></div>
<div class="row" style="top:233px"><div class="rn" style="top:8.7px;left:3.3px;font-size:12.3px">SwapCached</div><div class="rv" style="left:0;width:314.9px;top:6.6px">12.3 MB</div><div class="bar" style="left:323.5px;top:4.2px"><i style="width:0.2%"></i></div><div class="rp" style="left:1400px;width:202.5px;top:6.6px">0.1%</div></div>
<div class="sh" style="left:16.6px;top:278.5px;font-size:16.8px">Active / Inactive <span>#</span></div>
</div>
</div>
</div>
<div class="winborder"></div>
</body></html>
